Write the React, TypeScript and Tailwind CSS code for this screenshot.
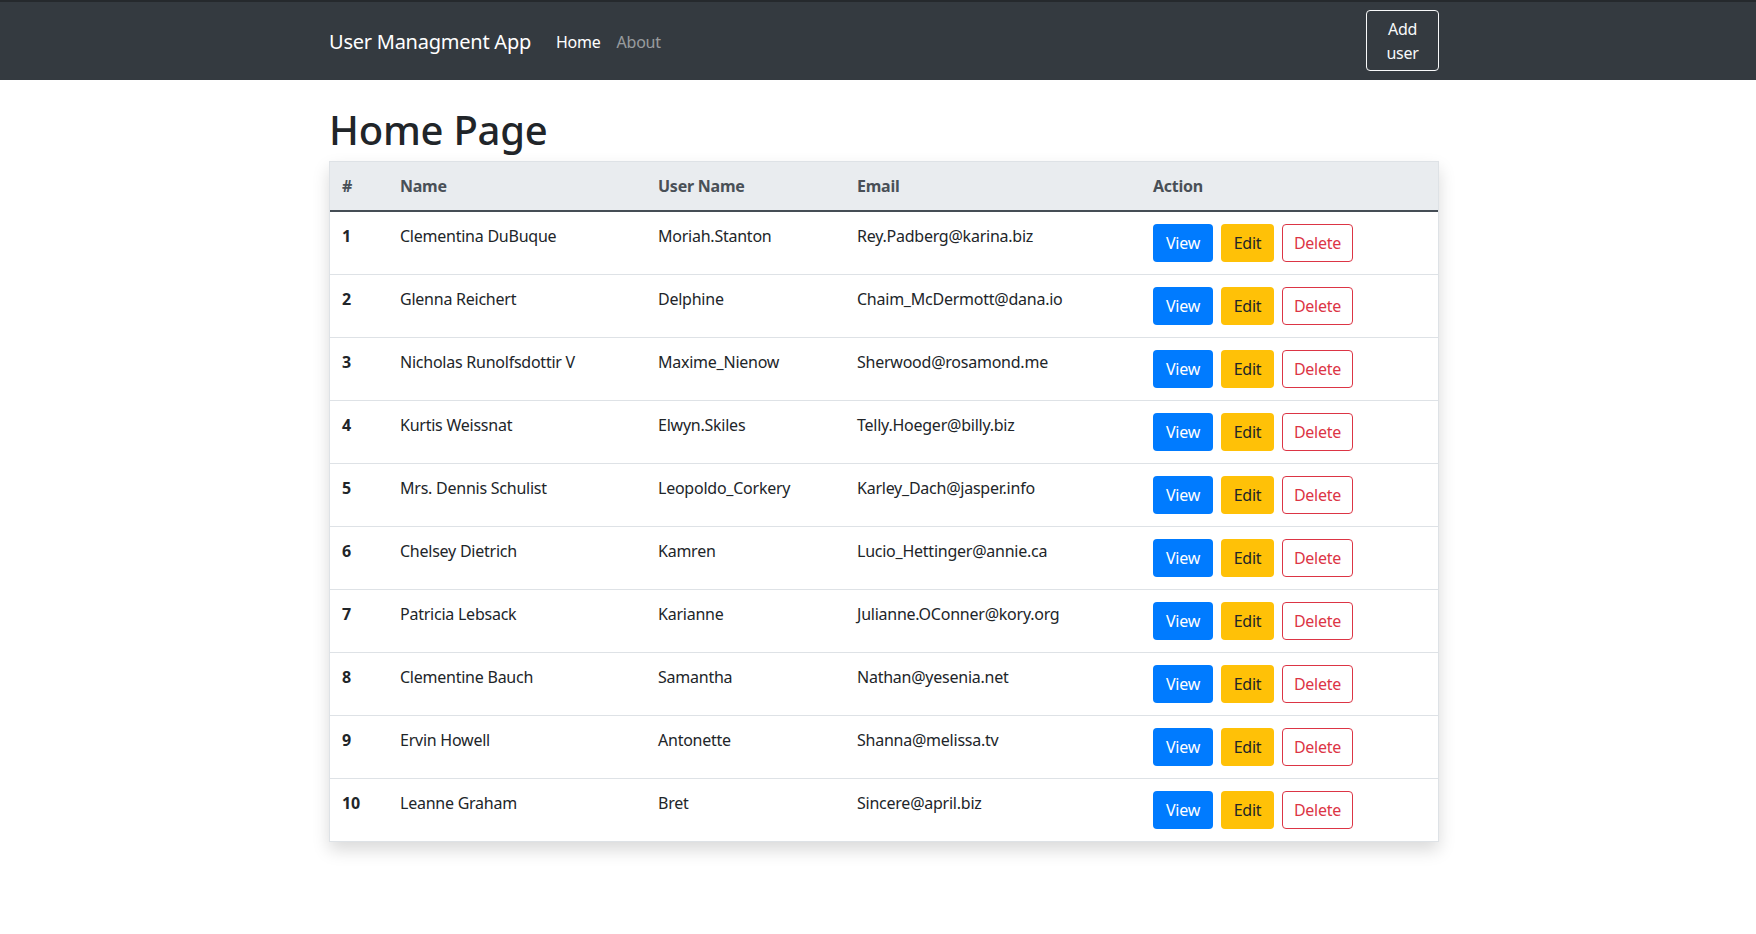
import React from 'react';

type User = { id: number; name: string; username: string; email: string };

const users: User[] = [
  { id: 1, name: 'Clementina DuBuque', username: 'Moriah.Stanton', email: 'Rey.Padberg@karina.biz' },
  { id: 2, name: 'Glenna Reichert', username: 'Delphine', email: 'Chaim_McDermott@dana.io' },
  { id: 3, name: 'Nicholas Runolfsdottir V', username: 'Maxime_Nienow', email: 'Sherwood@rosamond.me' },
  { id: 4, name: 'Kurtis Weissnat', username: 'Elwyn.Skiles', email: 'Telly.Hoeger@billy.biz' },
  { id: 5, name: 'Mrs. Dennis Schulist', username: 'Leopoldo_Corkery', email: 'Karley_Dach@jasper.info' },
  { id: 6, name: 'Chelsey Dietrich', username: 'Kamren', email: 'Lucio_Hettinger@annie.ca' },
  { id: 7, name: 'Patricia Lebsack', username: 'Karianne', email: 'Julianne.OConner@kory.org' },
  { id: 8, name: 'Clementine Bauch', username: 'Samantha', email: 'Nathan@yesenia.net' },
  { id: 9, name: 'Ervin Howell', username: 'Antonette', email: 'Shanna@melissa.tv' },
  { id: 10, name: 'Leanne Graham', username: 'Bret', email: 'Sincere@april.biz' },
];

const App = () => {
  return (
    <div className="min-h-screen bg-white text-[#212529] font-['Noto_Sans','Open_Sans',sans-serif] text-[16px] leading-6 tracking-[-0.015em]">
      {/* Navbar */}
      <nav className="h-[80px] bg-[#343a40] border-t-2 border-[#25292d]">
        <div className="ml-[329px] w-[1110px] h-full flex items-center justify-between">
          <div className="flex items-center pt-[1px]">
            <a href="#" className="text-[20px] leading-[30px] text-white mr-[17px]">User Managment App</a>
            <a href="#" className="px-2 py-2 text-white">Home</a>
            <a href="#" className="px-2 py-2 text-white/50">About</a>
          </div>
          <button className="w-[73px] h-[61px] border border-[#f8f9fa] rounded-[4px] text-[#f8f9fa] text-[16px] leading-6 px-3 py-1.5 mt-[-1px]">
            Add user
          </button>
        </div>
      </nav>

      {/* Content */}
      <div className="ml-[329px] w-[1110px]">
        <h1 className="text-[40px] leading-[48px] font-medium mt-[26px] mb-[7px]">Home Page</h1>
        <div className="border border-[#dee2e6] shadow-[0_8px_16px_rgba(0,0,0,0.15)]">
          <table className="w-full border-collapse">
            <thead>
              <tr className="bg-[#e9ecef] text-[#495057]">
                <th className="w-[58px] text-left font-bold px-3 py-3 border-b-2 border-[#454d55]">#</th>
                <th className="w-[258px] text-left font-bold px-3 py-3 border-b-2 border-[#454d55]">Name</th>
                <th className="w-[199px] text-left font-bold px-3 py-3 border-b-2 border-[#454d55]">User Name</th>
                <th className="w-[296px] text-left font-bold px-3 py-3 border-b-2 border-[#454d55]">Email</th>
                <th className="text-left font-bold px-3 py-3 border-b-2 border-[#454d55]">Action</th>
              </tr>
            </thead>
            <tbody>
              {users.map((u, i) => (
                <tr key={u.id} className={i > 0 ? 'border-t border-[#dee2e6]' : ''}>
                  <th className="text-left align-top font-bold px-3 py-3">{u.id}</th>
                  <td className="align-top px-3 py-3">{u.name}</td>
                  <td className="align-top px-3 py-3">{u.username}</td>
                  <td className="align-top px-3 py-3">{u.email}</td>
                  <td className="align-top px-3 py-3">
                    <div className="flex gap-2">
                      <button className="w-[60px] h-[38px] rounded-[4px] bg-[#007bff] text-white">View</button>
                      <button className="w-[53px] h-[38px] rounded-[4px] bg-[#ffc107] text-[#212529]">Edit</button>
                      <button className="w-[71px] h-[38px] rounded-[4px] border border-[#dc3545] text-[#dc3545] bg-white">Delete</button>
                    </div>
                  </td>
                </tr>
              ))}
            </tbody>
          </table>
        </div>
      </div>
    </div>
  );
};

export default App;
